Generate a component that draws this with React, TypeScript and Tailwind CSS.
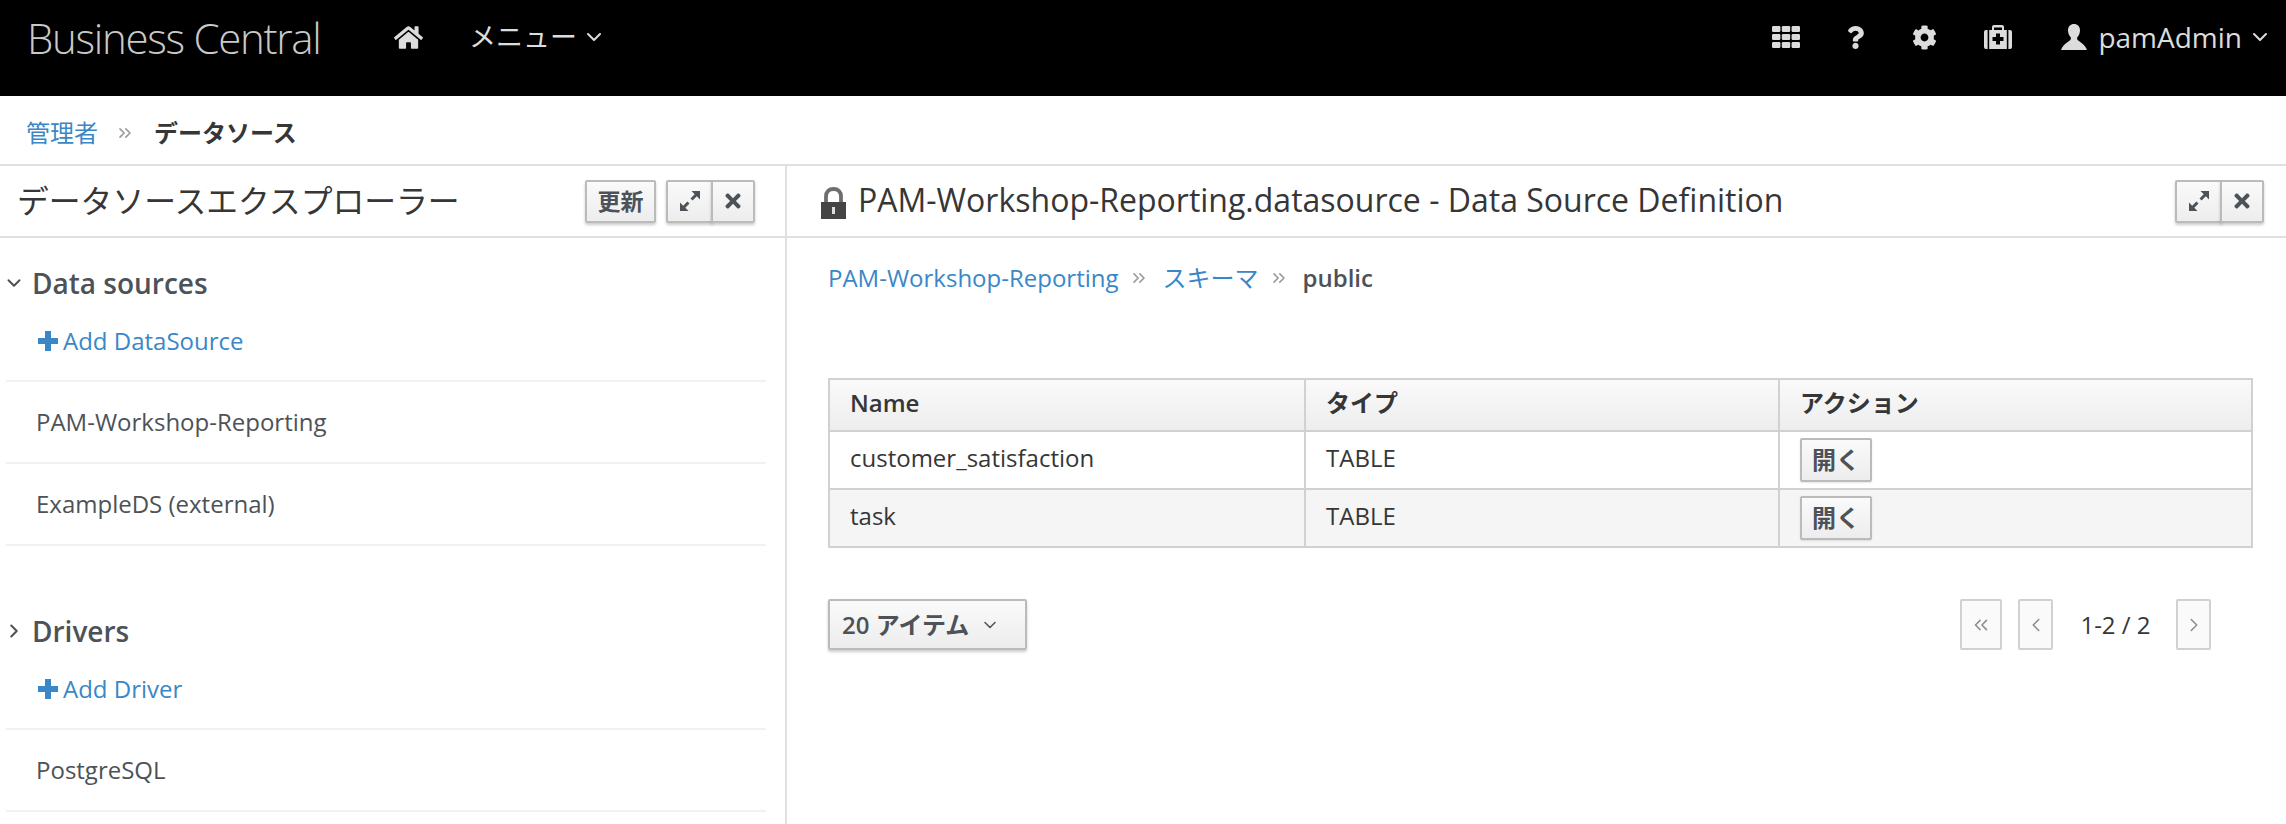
import React from 'react';
import { FaHome, FaQuestion, FaCog, FaTimes } from 'react-icons/fa';
import { ChevronDown, ChevronRight, ChevronLeft, ChevronsLeft, ChevronsRight } from 'lucide-react';

const GridIcon = () => (
  <svg width="28" height="22" viewBox="0 0 28 22" fill="currentColor">
    {[0, 8, 16].map((y) =>
      [0, 9.8, 19.6].map((x) => <rect key={`${x}-${y}`} x={x} y={y} width="8.4" height="6" rx="1.2" />),
    )}
  </svg>
);

const MedkitIcon = () => (
  <svg width="28" height="24" viewBox="0 0 28 24" fill="currentColor">
    <path d="M3.6 5v19H2a2 2 0 0 1-2-2V7a2 2 0 0 1 2-2zM24.400 5v19H26a2 2 0 0 0 2-2V7a2 2 0 0 0-2-2z" />
    <path
      fillRule="evenodd"
      d="M8 5V2a2 2 0 0 1 2-2h8a2 2 0 0 1 2 2v3h2.800v19H5.200V5zM10 2.400V5h8V2.400zM12 8.500v3.500H8.500v4H12v3.500h4V16h3.500v-4H16V8.500z"
    />
  </svg>
);

const UserIcon = () => (
  <svg width="26" height="26" viewBox="0 0 26 26" fill="currentColor">
    <path d="M13 0C9.500 0 7 2.500 7 6.200c0 2.800 1.100 5.300 2.500 6.900.6.700.6 2.300-.2 3C7.500 17.700 2 20.500 0 26h26c-2-5.500-7.500-8.300-9.300-9.900-.8-.7-.8-2.300-.2-3C17.900 11.500 19 9 19 6.200 19 2.500 16.500 0 13 0z" />
  </svg>
);

const PlusIcon = () => (
  <svg width="20" height="20" viewBox="0 0 20 20" fill="currentColor">
    <path d="M7 0h6v7h7v6h-7v7H7v-7H0V7h7z" />
  </svg>
);

const ExpandIcon = () => (
  <svg width="20" height="20" viewBox="0 0 20 20" fill="currentColor">
    <path d="M20 0v8.500L16.800 5.300l-4.200 4.200-2.100-2.100 4.200-4.200L11.500 0zM0 20v-8.500l3.200 3.200 4.200-4.200 2.100 2.100-4.200 4.200L8.500 20z" />
  </svg>
);

const LockIcon = () => (
  <svg width="25" height="32" viewBox="0 0 25 32">
    <path d="M5 16V9.500C5 4.500 8 2 12.500 2S20 4.500 20 9.500V16" fill="none" stroke="#6e6e6e" strokeWidth="3.800" />
    <rect x="0" y="15" width="25" height="17" fill="#444444" />
    <rect x="11" y="20" width="3" height="7" fill="#dddddd" />
  </svg>
);

const Sep = () => <ChevronsRight size={20} strokeWidth={2} className="text-[#9c9c9c]" />;

const ToolButton: React.FC<{ className?: string; children: React.ReactNode }> = ({ className, children }) => (
  <button
    className={`h-[43px] flex items-center justify-center border-2 border-[#bbbbbb] bg-gradient-to-b from-[#fafafa] to-[#ededed] text-[#4d5258] shadow-[0_2px_3px_rgba(0,0,0,0.2)] ${className}`}
  >
    {children}
  </button>
);

const PanelControls = () => (
  <div className="flex">
    <ToolButton className="w-[47px] rounded-l-[2px]">
      <ExpandIcon />
    </ToolButton>
    <ToolButton className="w-[44px] -ml-[2px] rounded-r-[2px] text-[22px]">
      <FaTimes />
    </ToolButton>
  </div>
);

const NavRow: React.FC<{ label: string }> = ({ label }) => (
  <div className="ml-[6px] w-[760px] h-[82px] pl-[30px] flex items-center border-b-2 border-[#f1f1f1] text-[24px] text-[#4d5258]">
    {label}
  </div>
);

const AddRow: React.FC<{ label: string }> = ({ label }) => (
  <div className="ml-[6px] w-[760px] h-[80px] pl-[32px] flex items-center gap-[5px] border-b-2 border-[#f1f1f1] text-[24px] text-[#3a87c8]">
    <PlusIcon />
    {label}
  </div>
);

const SectionTitle: React.FC<{ label: string; open?: boolean }> = ({ label, open }) => (
  <div className="h-[34px] flex items-center text-[28px] font-semibold text-[#4d5258]">
    <span className="w-[32px] pl-[3px] flex">
      {open ? <ChevronDown size={22} strokeWidth={2.2} /> : <ChevronRight size={22} strokeWidth={2.2} />}
    </span>
    {label}
  </div>
);

const rows = ['customer_satisfaction', 'task'];

export default function App() {
  return (
    <div className="w-full h-screen overflow-hidden bg-white text-[#363636] font-['Open_Sans','Noto_Sans_CJK_JP',sans-serif]">
      {/* top bar */}
      <header className="h-24 bg-black text-[#dcdcdc] flex items-start justify-between">
        <div className="flex items-center h-[74px]">
          <span className="ml-[27px] w-[340px] text-[42px] font-light tracking-[-1.3px] text-[#c9c9c9]">Business Central</span>
          <FaHome className="ml-[27px] text-[29px]" />
          <span className="ml-[46px] text-[27px]">メニュー</span>
          <ChevronDown size={24} strokeWidth={2} className="ml-[5px]" />
        </div>
        <div className="flex items-center h-[74px] pr-[14px]">
          <GridIcon />
          <FaQuestion className="ml-[44px] text-[23px]" />
          <FaCog className="ml-[45px] text-[25px]" />
          <span className="ml-[47px] flex"><MedkitIcon /></span>
          <span className="ml-[49px] flex"><UserIcon /></span>
          <span className="ml-[11px] text-[28px]">pamAdmin</span>
          <ChevronDown size={24} strokeWidth={2} className="ml-[6px]" />
        </div>
      </header>

      {/* breadcrumb */}
      <nav className="h-[68px] pl-[26px] pt-[6px] flex items-center text-[24px]">
        <span className="text-[#3a87c8]">管理者</span>
        <span className="ml-[17px] mr-[19px] flex"><Sep /></span>
        <span className="font-bold">データソース</span>
      </nav>

      <main className="flex h-[660px] border-t-2 border-[#e0e0e0]">
        {/* explorer */}
        <aside className="w-[787px] shrink-0 border-r-2 border-[#e0e0e0]">
          <div className="h-[72px] pl-[17px] pr-[30px] flex items-center justify-between border-b-2 border-[#e0e0e0]">
            <span className="text-[31.8px] text-[#363636]">データソースエクスプローラー</span>
            <div className="flex gap-[10px]">
              <ToolButton className="w-[71px] text-[23px] font-semibold rounded-[2px]">更新</ToolButton>
              <PanelControls />
            </div>
          </div>
          <div className="pt-[28px]">
            <SectionTitle label="Data sources" open />
            <div className="h-[2px]" />
            <AddRow label="Add DataSource" />
            <NavRow label="PAM-Workshop-Reporting" />
            <NavRow label="ExampleDS (external)" />
            <div className="mt-[68px]">
              <SectionTitle label="Drivers" />
            </div>
            <div className="h-[2px]" />
            <AddRow label="Add Driver" />
            <NavRow label="PostgreSQL" />
          </div>
        </aside>

        {/* definition */}
        <section className="flex-1 min-w-0">
          <div className="h-[72px] pl-[34px] pr-[22px] flex items-center justify-between border-b-2 border-[#e0e0e0]">
            <div className="flex items-center gap-[12px]">
              <span className="flex mt-[3px]"><LockIcon /></span>
              <span className="text-[32px] text-[#363636] pb-[2px]">PAM-Workshop-Reporting.datasource - Data Source Definition</span>
            </div>
            <PanelControls />
          </div>
          <div className="pl-[41px] pr-[32px]">
            <div className="h-[58px] pt-[22px] flex items-center text-[24px]">
              <span className="text-[#3a87c8]">PAM-Workshop-Reporting</span>
              <span className="ml-[10px] mr-[14px] flex"><Sep /></span>
              <span className="text-[#3a87c8]">スキーマ</span>
              <span className="ml-[10px] mr-[14px] flex"><Sep /></span>
              <span className="font-semibold text-[#4d5258]">public</span>
            </div>
            <table className="mt-[82px] w-[1425px] table-fixed border-collapse text-[24px] text-[#363636]">
              <thead>
                <tr className="h-[52px] bg-gradient-to-b from-[#fafafa] to-[#ededed]">
                  <th className="w-[476px] border-2 border-[#d1d1d1] px-[20px] pb-[4px] text-left font-semibold">Name</th>
                  <th className="w-[474px] border-2 border-[#d1d1d1] px-[20px] pb-[4px] text-left font-semibold">タイプ</th>
                  <th className="border-2 border-[#d1d1d1] px-[20px] pb-[4px] text-left font-semibold">アクション</th>
                </tr>
              </thead>
              <tbody>
                {rows.map((name, i) => (
                  <tr key={name} className={`h-[58px] ${i % 2 ? 'bg-[#f5f5f5]' : 'bg-white'}`}>
                    <td className="border-2 border-[#d1d1d1] px-[20px] pb-[4px]">{name}</td>
                    <td className="border-2 border-[#d1d1d1] px-[20px] pb-[4px]">TABLE</td>
                    <td className="border-2 border-[#d1d1d1] px-[20px]">
                      <button className="w-[72px] h-[44px] flex items-center justify-center border-2 border-[#bbbbbb] rounded-[2px] bg-gradient-to-b from-[#fafafa] to-[#ededed] text-[#4d5258] font-semibold shadow-[0_1px_2px_rgba(0,0,0,0.1)]">
                        開く
                      </button>
                    </td>
                  </tr>
                ))}
              </tbody>
            </table>

            {/* pager */}
            <div className="mt-[51px] w-[1425px] flex items-center justify-between">
              <button className="w-[199px] h-[51px] pl-[12px] flex items-center border-2 border-[#bbbbbb] rounded-[2px] bg-gradient-to-b from-[#fafafa] to-[#ededed] text-[24px] font-semibold text-[#4d5258] shadow-[0_2px_3px_rgba(0,0,0,0.2)]">
                20 アイテム
                <ChevronDown size={20} strokeWidth={1.8} className="ml-[11px]" />
              </button>
              <div className="flex items-center pr-[42px]">
                <span className="w-[42px] h-[51px] flex items-center justify-center border-2 border-[#d1d1d1] rounded-[2px] bg-[#fafafa] text-[#8b8d8f]">
                  <ChevronsLeft size={22} strokeWidth={1.7} />
                </span>
                <span className="ml-[16px] w-[35px] h-[51px] flex items-center justify-center border-2 border-[#d1d1d1] rounded-[2px] bg-[#fafafa] text-[#8b8d8f]">
                  <ChevronLeft size={22} strokeWidth={1.7} />
                </span>
                <span className="w-[123px] pl-[2px] text-center text-[24px]">1-2 / 2</span>
                <span className="w-[35px] h-[51px] flex items-center justify-center border-2 border-[#d1d1d1] rounded-[2px] bg-[#fafafa] text-[#8b8d8f]">
                  <ChevronRight size={22} strokeWidth={1.7} />
                </span>
              </div>
            </div>
          </div>
        </section>
      </main>
    </div>
  );
}
